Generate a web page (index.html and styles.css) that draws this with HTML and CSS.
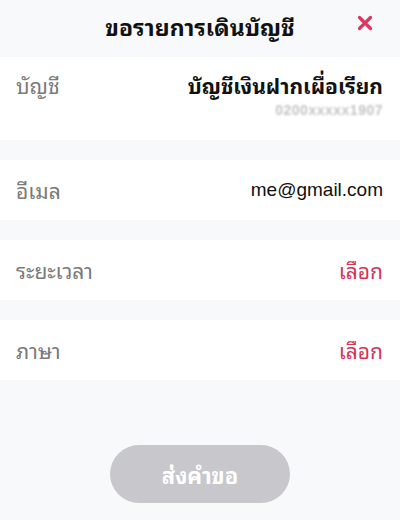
FILE: index.html
```html
<!DOCTYPE html>
<html lang="th">
<head>
<meta charset="utf-8">
<link rel="stylesheet" href="styles.css">
</head>
<body>
<div class="page">
  <header class="header">
    <h1 class="title">ขอรายการเดินบัญชี</h1>
    <button class="close" aria-label="close">
      <svg width="16" height="16" viewBox="0 0 16 16"><path d="M2.5 2.5 L13.5 13.5 M13.5 2.5 L2.5 13.5" stroke="#dc3560" stroke-width="3.2" stroke-linecap="round"/></svg>
    </button>
  </header>
  <section class="row row-account">
    <span class="label">บัญชี</span>
    <div class="account">
      <span class="account-name">บัญชีเงินฝากเผื่อเรียก</span>
      <span class="account-no">0200xxxxx1907</span>
    </div>
  </section>
  <section class="row">
    <span class="label">อีเมล</span>
    <span class="value">me@gmail.com</span>
  </section>
  <section class="row">
    <span class="label">ระยะเวลา</span>
    <span class="pick">เลือก</span>
  </section>
  <section class="row">
    <span class="label">ภาษา</span>
    <span class="pick">เลือก</span>
  </section>
  <div class="footer">
    <button class="submit">ส่งคำขอ</button>
  </div>
</div>
</body>
</html>
```
FILE: styles.css
```css
html, body {
  margin: 0;
  padding: 0;
  background: #f8f9fb;
}
body {
  font-family: "Noto Sans Thai Looped", "Noto Sans", sans-serif;
  width: 400px;
  height: 520px;
  overflow: hidden;
}
.page {
  display: flex;
  flex-direction: column;
  gap: 20px;
}
.header {
  position: relative;
  height: 57px;
  display: flex;
  align-items: center;
  justify-content: center;
  margin-bottom: -20px;
}
.title {
  margin: 0;
  font-size: 23px;
  font-weight: 700;
  color: #111;
  line-height: 1;
  padding-bottom: 6px;
}
.close {
  position: absolute;
  right: 27px;
  top: 15px;
  border: 0;
  background: none;
  padding: 0;
  width: 16px;
  height: 16px;
  display: flex;
}
.row {
  background: #fff;
  height: 60px;
  padding: 0 17px 0 16px;
  display: flex;
  align-items: center;
  justify-content: space-between;
}
.row-account {
  height: 83px;
  align-items: flex-start;
}
.row-account .label {
  margin-top: 14px;
}
.label {
  font-size: 21px;
  line-height: 1.3;
  color: #7a7a7a;
}
.account {
  display: flex;
  flex-direction: column;
  align-items: flex-end;
  margin-top: 14px;
}
.account-name {
  font-size: 21px;
  line-height: 1.3;
  font-weight: 700;
  color: #111;
}
.account-no {
  font-family: "Liberation Sans", sans-serif;
  font-size: 14px;
  line-height: 1;
  font-weight: 700;
  color: #c4c4c4;
  filter: blur(1.2px);
  margin-top: 5px;
  letter-spacing: 0.5px;
}
.value {
  font-size: 19px;
  color: #111;
  font-family: "Liberation Sans", sans-serif;
}
.pick {
  font-size: 21px;
  line-height: 1.3;
  color: #d6335a;
}
.footer {
  display: flex;
  justify-content: center;
  padding-top: 45px;
}
.submit {
  width: 180px;
  height: 58px;
  border: 0;
  border-radius: 29px;
  background: #c8c7cc;
  color: #fff;
  font-family: inherit;
  font-size: 22px;
  font-weight: 700;
  padding-bottom: 2px;
}
```
